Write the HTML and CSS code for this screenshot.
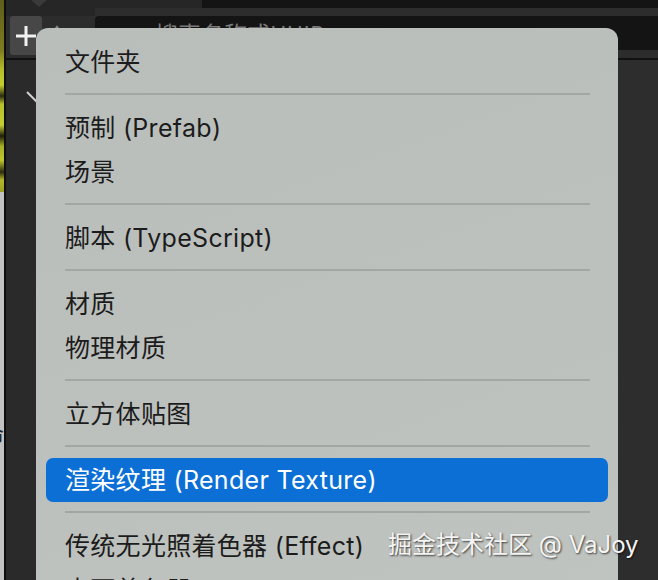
FILE: index.html
```html
<!DOCTYPE html>
<html lang="zh">
<head>
<meta charset="utf-8">
<title>Create menu</title>
<link rel="stylesheet" href="styles.css">
</head>
<body>
<div class="app">
  <div class="edge">
    <div class="edge-img"></div>
    <div class="edge-lower"><span class="edge-char">命</span></div>
  </div>
  <div class="edge-line"></div>
  <div class="main">
    <div class="top">
      <div class="top-left"><span class="tri"></span></div>
      <div class="top-right">
        <div class="stripe1"><div class="stripe1-a"></div><div class="stripe1-b"></div></div>
        <div class="stripe2"></div>
      </div>
    </div>
    <div class="toolbar">
      <div class="plus-btn">
        <svg width="22" height="22" viewBox="0 0 22 22"><path d="M11 1V21M1 11H21" stroke="#f2f2f2" stroke-width="3" fill="none"/></svg>
      </div>
      <div class="sort-icon">
        <svg width="24" height="14" viewBox="0 0 24 14"><path d="M3 12V3M0 6L3 2L6 6M10 4H22M16 4V14" stroke="#8a8a8a" stroke-width="2" fill="none"/></svg>
      </div>
      <div class="search">
        <svg class="search-ico" width="14" height="14" viewBox="0 0 14 14"><circle cx="7" cy="7" r="5" stroke="#9a9a9a" stroke-width="2" fill="none"/></svg>
        <span class="search-text">搜索名称或UUID</span>
      </div>
    </div>
    <div class="divider"></div>
    <div class="panel">
      <svg class="chev" width="24" height="14" viewBox="0 0 24 14"><path d="M2 2L12 12L22 2" stroke="#cfcfcf" stroke-width="2" fill="none"/></svg>
    </div>
  </div>
</div>

<div class="menu">
  <div class="item">文件夹</div>
  <div class="sep"></div>
  <div class="item">预制 (Prefab)</div>
  <div class="item">场景</div>
  <div class="sep"></div>
  <div class="item">脚本 (TypeScript)</div>
  <div class="sep"></div>
  <div class="item">材质</div>
  <div class="item">物理材质</div>
  <div class="sep"></div>
  <div class="item">立方体贴图</div>
  <div class="sep"></div>
  <div class="item active">渲染纹理 (Render Texture)</div>
  <div class="sep"></div>
  <div class="item">传统无光照着色器 (Effect)</div>
  <div class="item">表面着色器 (Effect)</div>
</div>

<div class="watermark">掘金技术社区 @ VaJoy</div>
</body>
</html>
```
FILE: styles.css
```css
* { box-sizing: border-box; }
html, body { margin: 0; padding: 0; }
body {
  width: 658px;
  height: 580px;
  overflow: hidden;
  background: #2a2a2a;
  font-family: Inter, "Noto Sans CJK SC", sans-serif;
  position: relative;
}
.app {
  display: flex;
  height: 580px;
}
.edge {
  width: 4px;
  display: flex;
  flex-direction: column;
  overflow: hidden;
}
.edge-img {
  height: 192px;
  background: linear-gradient(180deg, #5e5d1c 0px, #7c7c1f 50px, #b5bf2a 70px, #c4cc2e 85px, #2a2a10 96px, #b7c02a 104px, #c6cd34 125px, #1e1e0a 136px, #a4ae26 146px, #c1c92d 160px, #2b2b12 172px, #b0b82a 180px, #9ba024 192px);
}
.edge-lower {
  flex: 1;
  background: #c2c2c2;
  padding-top: 228px;
}
.edge-char {
  display: block;
  margin-left: -18px;
  font-family: "Noto Sans CJK SC", sans-serif;
  font-size: 22px;
  line-height: 26px;
  color: #222;
}
.edge-line {
  width: 2px;
  background: #0e0e0e;
}
.main {
  flex: 1;
  display: flex;
  flex-direction: column;
}
.top {
  height: 16px;
  display: flex;
}
.top-left {
  width: 89px;
  background: #262626;
  position: relative;
}
.tri {
  position: absolute;
  left: 25px;
  top: 0;
  width: 0;
  height: 0;
  border-left: 8px solid transparent;
  border-right: 8px solid transparent;
  border-top: 7px solid #3a3a3a;
}
.top-right {
  flex: 1;
  display: flex;
  flex-direction: column;
}
.stripe1 {
  height: 8px;
  display: flex;
}
.stripe1-a { width: 107px; background: #262626; }
.stripe1-b { flex: 1; background: #141414; }
.stripe2 {
  height: 8px;
  background: #2d2d2d;
}
.toolbar {
  height: 42px;
  display: flex;
  align-items: flex-start;
  background: #2c2c2c;
}
.plus-btn {
  width: 32px;
  height: 39px;
  margin-left: 4px;
  background: #474747;
  border-radius: 3px;
  display: flex;
  align-items: center;
  justify-content: center;
}
.sort-icon {
  width: 53px;
  height: 34px;
  display: flex;
  align-items: flex-start;
  justify-content: center;
  padding-top: 9px;
  padding-right: 6px;
}
.search {
  flex: 1;
  height: 34px;
  background: #141414;
  border-radius: 4px 0 0 4px;
  display: flex;
  align-items: center;
  padding-left: 17px;
}
.search-ico { margin-top: 4px; }
.search-text {
  margin-left: 29px;
  font-family: "Noto Sans CJK SC", sans-serif;
  font-size: 23px;
  color: #7a7a7a;
}
.divider {
  height: 2px;
  background: #111;
}
.panel {
  flex: 1;
  background: linear-gradient(90deg, #2a2a2a, #2d2d2d);
  position: relative;
  padding: 30px 0 0 19px;
}
.chev { display: block; }

.menu {
  position: absolute;
  left: 36px;
  top: 28px;
  width: 582px;
  height: 600px;
  background: linear-gradient(160deg, #babebb 0%, #bdc1bd 60%, #c0c4c0 100%);
  border-radius: 12px;
  padding-top: 12px;
}
.item {
  height: 44px;
  line-height: 44px;
  padding-left: 29px;
  font-size: 25px;
  letter-spacing: 0.3px;
  color: #1c1c1c;
  white-space: nowrap;
}
.item.active {
  margin: 0 10px;
  padding-left: 19px;
  background: #0b6fd6;
  color: #fff;
  border-radius: 7px;
}
.sep {
  height: 22px;
  padding: 9px 28px 0 29px;
}
.sep::before {
  content: "";
  display: block;
  height: 2px;
  background: #a3a7a3;
}
.watermark {
  position: absolute;
  left: 388px;
  top: 529px;
  font-family: Inter, "Noto Sans CJK SC", sans-serif;
  font-size: 24px;
  line-height: 32px;
  color: #f4f4f4;
  text-shadow: 1px 1px 2px rgba(0,0,0,0.7);
  white-space: nowrap;
}
```
